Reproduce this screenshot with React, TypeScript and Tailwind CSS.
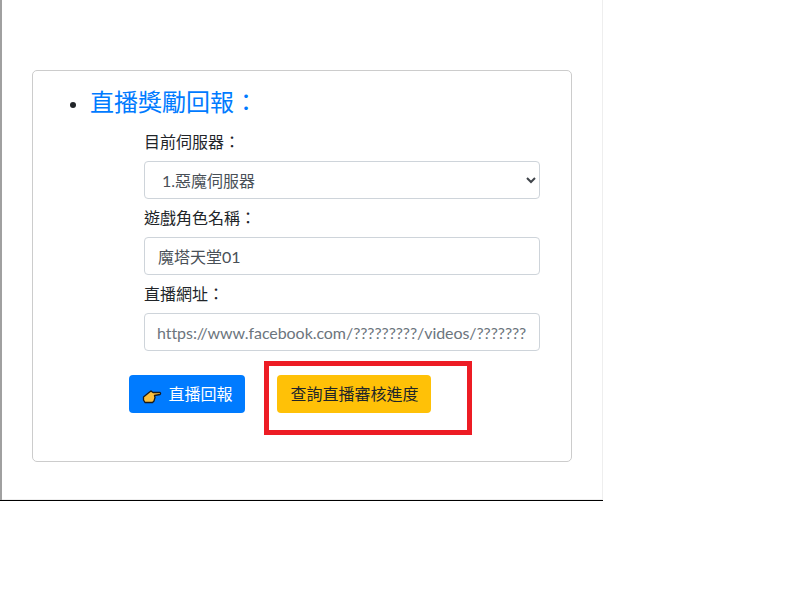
const font = { fontFamily: 'Lato, "Noto Sans CJK TC", sans-serif' };

function Hand() {
  return (
    <svg width="20" height="15" viewBox="0 0 20 15" className="mr-[6px] mt-[4px]">
      <path
        d="M1.5 8 L7 3.5 L9 2 L11 3.5 L18 3.5 Q19.2 4.5 18 5.5 L12.5 6.5 L13 8.5 L12 12 L10.5 13.5 L3 13.5 L1.5 11 Z"
        fill="#fbbf3c"
        stroke="#1a1a1a"
        strokeWidth="1.3"
        strokeLinejoin="round"
      />
    </svg>
  );
}

export default function App() {
  return (
    <div lang="zh-TW" className="w-[786px] h-[589px] bg-white overflow-hidden relative text-[#212529]" style={font}>
      <div className="w-[603px] h-[501px] flex border-b border-b-black">
        <div className="w-[2px] bg-[#a0a0a0]"></div>
        <div className="flex-1 border-r border-r-[#eeeeee] shadow-[inset_0_-1px_0_#eeeeee] pt-[70px] pl-[30px] box-border">
          <div className="w-[540px] h-[392px] border border-[#cccccc] rounded-[5px] box-border pt-[16px]">
            <div className="flex items-center h-[32px] pl-[37px]">
              <span className="w-[6px] h-[6px] rounded-full bg-[#212529] mr-[14px] mt-[3px]"></span>
              <h2 className="text-[24px] leading-[32px] mb-[2px] text-[#007bff]">直播獎勵回報：</h2>
            </div>
            <div className="ml-[111px] w-[396px] mt-[11px]">
              <label className="block text-base h-6 leading-6">目前伺服器：</label>
              <div className="relative mt-[7px]">
                <div className="h-[38px] border border-[#ced4da] rounded-[4px] pl-[17px] pt-[2px] flex items-center text-base text-[#495057]">1.惡魔伺服器</div>
                <svg className="absolute right-[4px] top-[14px]" width="10" height="10" viewBox="0 0 10 10">
                  <path d="M1 3 L5 7 L9 3" fill="none" stroke="#3f444a" strokeWidth="2" />
                </svg>
              </div>
              <label className="block text-base h-6 leading-6 mt-[7px]">遊戲角色名稱：</label>
              <div className="h-[38px] mt-[7px] border border-[#ced4da] rounded-[4px] pl-[13px] pr-[12px] pt-[2px] flex items-center text-base text-[#495057]">魔塔天堂01</div>
              <label className="block text-base h-6 leading-6 mt-[7px]">直播網址：</label>
              <div className="h-[38px] mt-[7px] border border-[#ced4da] rounded-[4px] px-[12px] pt-[2px] flex items-center text-base tracking-[-0.06px] text-[#6c757d] whitespace-nowrap">https://www.facebook.com/?????????/videos/???????</div>
            </div>
            <div className="flex ml-[96px] mt-[24px] gap-[32px]">
              <button className="h-[38px] w-[116px] pl-[1px] bg-[#007bff] text-white rounded-[4px] flex items-center justify-center text-base">
                <Hand />
                直播回報
              </button>
              <button className="h-[38px] w-[154px] pl-[1px] bg-[#ffc107] text-[#212529] rounded-[4px] flex items-center justify-center text-base">查詢直播審核進度</button>
            </div>
          </div>
        </div>
      </div>
      <div className="absolute left-[264px] top-[361px] w-[208px] h-[74px] border-[5px] border-[#ed1c24]"></div>
    </div>
  );
}
